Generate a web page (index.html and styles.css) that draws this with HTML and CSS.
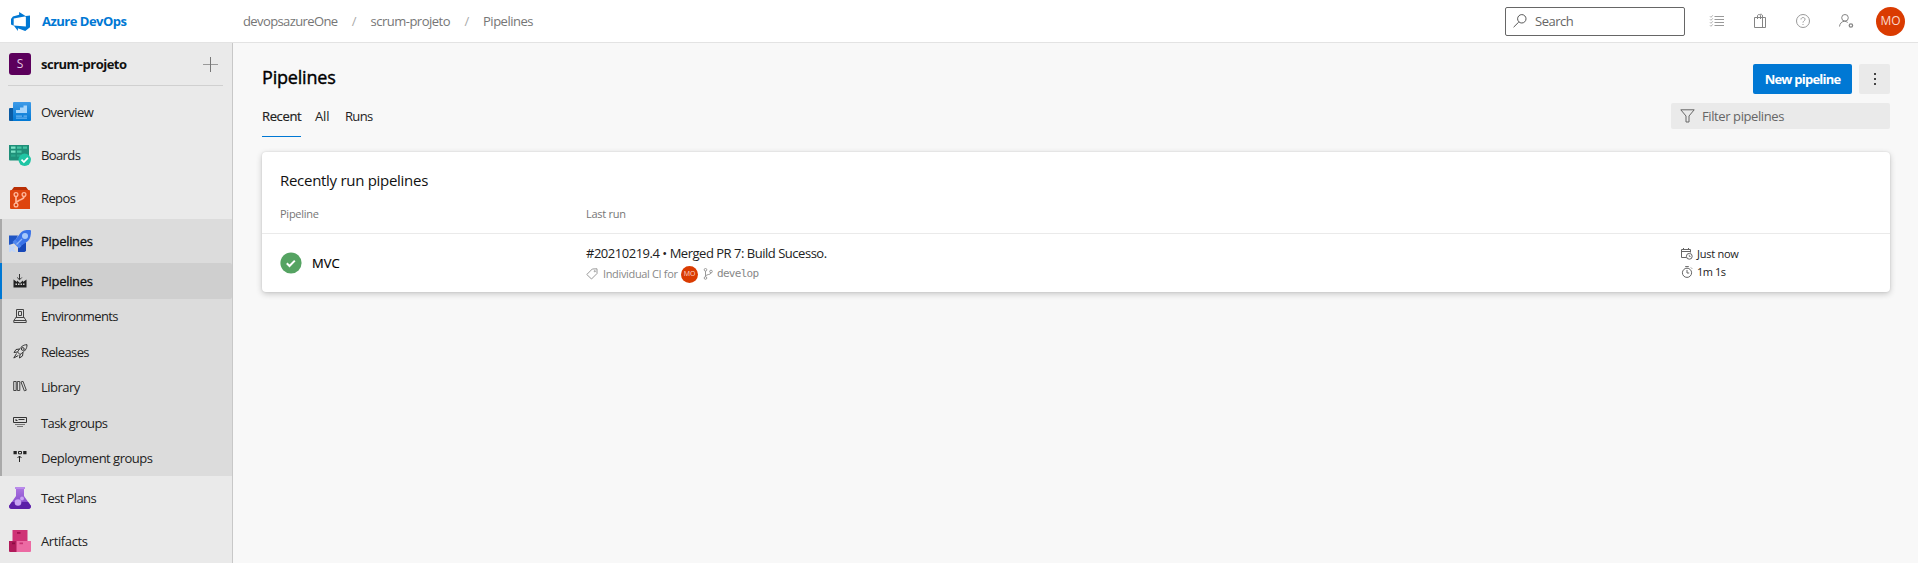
FILE: index.html
```html
<!DOCTYPE html>
<html lang="en">
<head>
<meta charset="utf-8">
<title>Pipelines</title>
<link rel="stylesheet" href="styles.css">
</head>
<body>
<header class="topbar">
  <a class="brand">
    <svg class="brand-logo" viewBox="1 1 16 16"><path fill="#0078d4" d="M17 4v9.740l-4 3.280-6.200-2.260V17l-3.510-4.590 10.230.8V4.440zm-3.410.490L7.850 1v2.290L2.580 4.840 1 6.870v4.610l2.260 1V6.570z"/></svg>
    <span class="brand-name">Azure DevOps</span>
  </a>
  <nav class="crumbs">
    <span class="snug">devopsazureOne</span><i>/</i><span>scrum-projeto</span><i>/</i><span>Pipelines</span>
  </nav>
  <div class="tools">
    <div class="search">
      <svg width="14" height="14" viewBox="0 0 14 14" fill="none" stroke="#555"><circle cx="8.800" cy="4.800" r="4.200"/><path d="M5.800 8 .6 13.200"/></svg>
      <span>Search</span>
    </div>
    <div class="tool-icons">
      <svg width="16" height="16" viewBox="0 0 16 16" fill="none" stroke="#999"><path d="M5.500 3.500H15M5.500 6.500H15M5.500 9.500H15M5.500 12.500H15"/><path stroke-width=".8" d="m1 3.300 1 1 1.800-2M1 6.300l1 1 1.800-2M1 9.300l1 1 1.800-2M1 12.300l1 1 1.800-2"/></svg>
      <svg width="16" height="16" viewBox="0 0 16 16" fill="none" stroke="#858585"><path d="M2.500 4.500h11v10h-11zM10.500 4.500v10M5.500 6V3c0-2 3-2 3 0v3M8 1.600c1-.8 2.500-.2 2.500 1.400v3"/></svg>
      <svg width="16" height="16" viewBox="0 0 16 16" fill="none" stroke="#999"><circle cx="8" cy="8" r="6.500"/><path d="M6 6.500c0-2.600 4-2.600 4-.2C10 7.800 8 7.900 8 9.600M8 11v1"/></svg>
      <svg width="16" height="16" viewBox="0 0 16 16" fill="none" stroke="#858585"><circle cx="7" cy="4.800" r="3.300"/><path d="M1.500 13.500c.3-3.200 2.500-5.200 5-5.200 1.200 0 2.300.4 3.200 1.200"/><circle cx="12.900" cy="12.500" r="1.700" stroke-width="1.300"/></svg>
    </div>
    <span class="avatar">MO</span>
  </div>
</header>

<div class="shell">
  <aside class="sidebar">
    <div class="project">
      <span class="project-badge">S</span>
      <span class="project-name">scrum-projeto</span>
      <svg class="plus" width="15" height="15" viewBox="0 0 15 15" fill="none"><path stroke="#999" d="M0 7.500h15"/><path stroke="#777" d="M7.500 0v15"/></svg>
    </div>
    <nav class="menu">
      <a class="item"><svg width="22" height="22" viewBox="0 0 22 22"><defs><linearGradient id="ov" x2="0" y2="1"><stop stop-color="#3f9be8"/><stop offset="1" stop-color="#0078d4"/></linearGradient></defs><path fill="#0a5ba4" d="M0 8q0-1 1-1h4v13H1q-1 0-1-1z"/><path fill="url(#ov)" d="M4 2q0-1 1-1h16q1 0 1 1v17q0 1-1 1H4z"/><path fill="#a9d6fb" d="M7 9h4v3H7zM11 6.500h3.500V12H11zM14.500 4.500H18V12h-3.500z"/><path fill="#68b2f0" d="M7 14.500h6v1.300H7zM14.500 14.500H18v1.300h-3.500zM7 16.500h11v1.300H7z"/></svg><span>Overview</span></a>
      <a class="item"><svg width="22" height="22" viewBox="0 0 22 22"><path fill="#1f8f79" d="M0 1h20v15.500H1q-1 0-1-1z"/><path fill="#7fe3c8" d="M2 2.500h4.500v2.200H2zM2 6.500h4.500v2.200H2z"/><path fill="#45c3a3" d="M8 2.500h4.500v2.200H8zM14 2.500h4v2.200h-4zM8 6.500h4.500v2.200H8z"/><path fill="#2aa88c" d="M2 10.500h4.500v2.200H2zM8 10.500h4.500v2.200H8z"/><circle cx="15.700" cy="15.800" r="6.200" fill="#1fc5a4"/><path d="m12.500 15.600 2.400 2.400 4-4.200" fill="none" stroke="#fff" stroke-width="1.700"/></svg><span class="snug">Boards</span></a>
      <a class="item"><svg width="22" height="22" viewBox="0 0 22 22"><path fill="#b92f04" d="M5 0h12l3 4H2z"/><path fill="#de450f" d="M1 4q0-1 1-1h18q1 0 1 1v18H2q-1 0-1-1z"/><g fill="none" stroke="#ffb79b" stroke-width="1.300"><circle cx="7" cy="7.500" r="1.900"/><circle cx="15" cy="7.500" r="1.900"/><circle cx="7" cy="18" r="1.900"/></g><path fill="none" stroke="#ffb79b" stroke-width="1.700" d="M7 9.500V16M15 9.500c0 3-3 2.500-5.500 4.200C8 14.700 7 15.500 7 16"/></svg><span class="snug">Repos</span></a>
      <div class="group">
        <a class="item item-open"><svg width="22" height="22" viewBox="0 0 22 22"><path fill="#1f55c4" d="M0 5.500h9l-4.500 8L0 15z"/><path fill="#1748b8" d="M17 12v9l-1.500 1H9v-5z"/><path fill="#3a73e8" d="M5 11.500 11.500 3C13.500.5 16 0 21 0q1 0 1 1c0 4-.5 7.500-3 10L10.500 17z"/><path fill="#4f86ee" d="M3.500 12 6 9.500l6.500 6.500-2.500 2.500z"/><path stroke="#8db5f8" stroke-width="1.300" d="m7.500 14.500 5.500-5.500"/><circle cx="16" cy="6" r="3" fill="#a6c8fb"/><path fill="#c3d7f8" d="M0 14.500 3 17l1-2 2.500 2.500-2 1L7 22H5l-2.500-1.500L1.500 22H0z"/></svg><span class="strong">Pipelines</span></a>
        <a class="sub sub-active"><svg width="14" height="14" viewBox="0 0 14 14"><path fill="none" stroke="#333" d="M6.500 0v5.500M4.200 3.500 6.500 5.800l2.300-2.300"/><path fill="#222" d="M.5 5.500 4 8V6.500L7 9l3-2.500V8l3.500-2.500v8H.5z"/><path fill="#ccc" d="M2.500 9.500H4V11H2.500zM5 9.500h1.500V11H5zM7.500 9.500H9V11H7.500zM10 9.500h1.500V11H10z"/></svg><span class="strong">Pipelines</span></a>
        <a class="sub"><svg width="14" height="14" viewBox="0 0 14 14" fill="none" stroke="#444"><path d="M3.500.500h7v8h-7zM2.500 8.500h9M3 8.500.8 11.500v2h12.400v-2L11 8.500M1 11.500h12M5.500 2.500h3v4h-3z"/></svg><span class="snug">Environments</span></a>
        <a class="sub"><svg width="15" height="15" viewBox="0 0 15 15" fill="none" stroke="#333"><path d="M14 .7C10 .7 8 2.700 4.500 8l2.500 2.500C12 7 14 5 14 .7zM6.500 5 3 5.500 1 8.500l3.500-.5M10 8.500l-.5 3.500-3 2 .5-3.500M3.500 9.500 .8 14l4.500-2.500"/><circle cx="9.800" cy="5" r="1.400"/></svg><span class="snug">Releases</span></a>
        <a class="sub"><svg width="14" height="14" viewBox="0 0 14 14" fill="none" stroke="#444"><path d="M.7 1.500h2.500v9H.7zM4.300 1.500h2.500v9H4.300zM8 2l2-.7 3.300 8.900-2 .6z"/></svg><span>Library</span></a>
        <a class="sub"><svg width="14" height="14" viewBox="0 0 14 14" fill="none" stroke="#333"><path d="M.500 1.500h13v5H.500zM2.500 4.500h2M5.500 3.500h6M2.500 3.500h1"/><path stroke="#777" d="M2 8.500h10M4 10.500h6"/></svg><span class="snug">Task groups</span></a>
        <a class="sub"><svg width="14" height="14" viewBox="0 0 14 14"><path fill="#222" d="M.5 0h3.300v3.300H.5zM10.200 0h3.300v3.300h-3.300z"/><path fill="none" stroke="#222" d="M5.500.500h3v2.300h-3zM6.500 11V5.200M4.500 7l2-2 2 2"/></svg><span>Deployment groups</span></a>
      </div>
      <a class="item"><svg width="22" height="22" viewBox="0 0 22 22"><defs><linearGradient id="tp" x2="0" y2="1"><stop stop-color="#ab74e0"/><stop offset="1" stop-color="#7a3fc6"/></linearGradient></defs><path fill="url(#tp)" d="M7 1.500h8V9l7 10q0 3-3 3H3q-3 0-3-3L7 9z"/><path fill="#5c1fa8" d="M2.800 15h16.400L22 19q0 3-3 3H3q-3 0-3-3z"/><path fill="#b98bea" d="M6 0h10v2H6z"/><circle cx="9" cy="15.500" r="3.300" fill="#c9a3f3"/><circle cx="13" cy="11.500" r="1.900" fill="#c9a3f3"/></svg><span class="snug">Test Plans</span></a>
      <a class="item"><svg width="22" height="22" viewBox="0 0 22 22"><path fill="#cf3376" d="M3.500 0h15v11h-15z"/><path fill="#a31252" d="M8 2h3.500v1.800H8z"/><path fill="#b11b5b" d="M0 11h8v11H1q-1 0-1-1z"/><path fill="#ec6aa3" d="M7.500 11H22v10q0 1-1 1H7.500z"/><path fill="#8a0d43" d="M3 12.500h3v1.700H3z"/><path fill="#c93274" d="M10.500 12.500H14v1.700h-3.500z"/></svg><span class="loose">Artifacts</span></a>
    </nav>
  </aside>

  <main class="content">
    <div class="title-row">
      <h1>Pipelines</h1>
      <div class="actions">
        <button class="primary">New pipeline</button>
        <button class="more"><svg width="3" height="13" viewBox="0 0 3 13" fill="#444"><path d="M1 0h2v2H1zM1 5h2v2H1zM1 10h2v2H1z"/></svg></button>
      </div>
    </div>
    <div class="tab-row">
      <nav class="tabs"><a class="tab tab-on">Recent</a><a class="tab tab-all">All</a><a class="tab tab-runs">Runs</a></nav>
      <div class="filter">
        <svg width="15" height="14" viewBox="0 0 15 14" fill="none" stroke="#666"><path d="M.8.800h13.400L9 7v6H6V7z"/></svg>
        <span class="loose">Filter pipelines</span>
      </div>
    </div>
    <section class="card">
      <h2>Recently run pipelines</h2>
      <div class="grid head"><span>Pipeline</span><span>Last run</span></div>
      <div class="grid row">
        <div class="pipe">
          <svg width="22" height="22" viewBox="0 0 22 22"><circle cx="11" cy="11" r="10.600" fill="#55a362"/><path d="m6.800 11.300 2.700 2.700 5.300-5.400" fill="none" stroke="#fff" stroke-width="2"/></svg>
          <span class="pipe-name">MVC</span>
        </div>
        <div class="run">
          <div class="run-title">#20210219.4 • Merged PR 7: Build Sucesso.</div>
          <div class="run-meta">
            <svg width="12" height="12" viewBox="0 0 12 12" fill="none" stroke="#999"><path d="M.8 6.500 6.300 1 11 .8V5.500L5.500 11z"/><circle cx="8.800" cy="3.200" r=".6"/></svg>
            <span class="reason">Individual CI for</span>
            <span class="avatar avatar-sm">MO</span>
            <svg class="branch" width="10" height="12" viewBox="0 0 10 12" fill="none" stroke="#999"><circle cx="2.500" cy="1.800" r="1.300"/><circle cx="2.500" cy="10" r="1.300"/><circle cx="8" cy="3.500" r="1.300"/><path d="M2.500 3v5.700M8 5c0 2-5.500 1-5.500 3.500"/></svg>
            <span class="mono">develop</span>
          </div>
        </div>
        <div class="times">
          <div class="time"><svg width="12" height="12" viewBox="0 0 12 12" fill="none" stroke="#666"><path d="M5.500 9.500h-5v-8h9v3M.5 3.500h9M2.500 0v2M7.500 0v2"/><circle cx="8.300" cy="8.300" r="2.900"/><path d="M8.300 6.800v1.700h1.300" stroke-width=".8"/></svg><span>Just now</span></div>
          <div class="time"><svg width="12" height="12" viewBox="0 0 12 12" fill="none" stroke="#666"><circle cx="6" cy="6.800" r="4.600"/><path d="M6 4v3h2.200M4.200.600h3.600M10 1.600l1 1"/></svg><span class="duration">1m 1s</span></div>
        </div>
      </div>
    </section>
  </main>
</div>
</body>
</html>
```
FILE: styles.css
```css
* { box-sizing: border-box; }
body {
  margin: 0;
  height: 563px;
  overflow: hidden;
  display: flex;
  flex-direction: column;
  font: 13px/20px "Open Sans", "Noto Sans", sans-serif;
  letter-spacing: -0.5px;
  color: #222;
  background: #f8f8f8;
}
svg { display: block; flex: none; }
span { white-space: nowrap; }
h1, h2 { margin: 0; }
.snug { letter-spacing: -0.61px; }
.loose { letter-spacing: -0.4px; }

.topbar {
  height: 43px;
  flex: none;
  display: flex;
  align-items: center;
  background: #fff;
  border-bottom: 1px solid #e3e3e3;
  padding-right: 13px;
}
.brand { display: flex; align-items: center; gap: 12px; width: 243px; padding-left: 11px; }
.brand-logo { width: 19px; height: 19px; }
.brand-name { font-weight: 700; color: #0078d4; }
.crumbs { display: flex; color: #767676; }
.crumbs i { font-style: normal; width: 33px; text-align: center; color: #aaa; }
.tools { margin-left: auto; display: flex; align-items: center; }
.search {
  width: 180px;
  height: 29px;
  border: 1px solid #666;
  border-radius: 2px;
  display: flex;
  align-items: center;
  gap: 8px;
  padding-left: 7px;
  color: #666;
}
.tool-icons { display: flex; gap: 27px; margin: 0 22px 0 24px; }
.avatar {
  width: 29px;
  height: 29px;
  border-radius: 50%;
  background: #da3b01;
  color: #fbd9cc;
  font-size: 12px;
  letter-spacing: 0;
  display: flex;
  align-items: center;
  justify-content: center;
}
.avatar-sm { width: 17px; height: 17px; font-size: 7px; }

.shell { flex: 1; display: flex; min-height: 0; }
.sidebar { width: 233px; flex: none; background: #eaeaea; border-right: 1px solid #c8c8c8; }
.project {
  height: 43px;
  margin: 0 9px 4px 8px;
  border-bottom: 1px solid #d0d0d0;
  display: flex;
  align-items: center;
  padding: 0 5px 0 1px;
}
.project-badge {
  width: 22px;
  height: 22px;
  border-radius: 3px;
  background: #5c005c;
  color: #e3c9e3;
  font-size: 12px;
  letter-spacing: 0;
  display: flex;
  align-items: center;
  justify-content: center;
  margin-right: 10px;
}
.project-name { font-weight: 700; color: #111; }
.plus { margin-left: auto; }
.item { height: 43px; display: flex; align-items: center; gap: 10px; padding-left: 9px; }
.group { background: #dcdcdc; box-shadow: inset 2px 0 #a9a9a9; }
.item-open { height: 44px; }
.sub { height: 35.5px; display: flex; align-items: center; padding-left: 13px; }
.sub svg { margin-right: 14px; }
.sub svg[width="15"] { margin-right: 13px; }
.sub-active { background: #cfcfcf; box-shadow: inset 2px 0 #0078d4; border-radius: 0 2px 2px 0; }
.strong { color: #111; letter-spacing: -0.3px; -webkit-text-stroke: 0.3px #111; }

.content { flex: 1; padding: 21px 28px 0 29px; }
.title-row { display: flex; justify-content: space-between; height: 39px; }
h1 { font-size: 18px; line-height: 27px; font-weight: 400; letter-spacing: -0.2px; color: #000; -webkit-text-stroke: 0.4px #000; }
.actions { display: flex; gap: 7px; }
button { border: 0; border-radius: 2px; height: 30px; padding: 0; font: inherit; display: flex; align-items: center; justify-content: center; }
.primary { width: 99px; background: #0078d4; color: #fff; font-weight: 700; letter-spacing: -0.78px; }
.more { width: 31px; background: #eaeaea; }
.tab-row { display: flex; justify-content: space-between; height: 49px; }
.tabs { display: flex; height: 34px; }
.tab { padding-top: 3px; }
.tab-on { width: 39px; margin-right: 14px; letter-spacing: -0.35px; border-bottom: 1px solid #0078d4; -webkit-text-stroke: 0.2px #222; }
.tab-all { width: 14px; margin-right: 16px; letter-spacing: -0.1px; }
.tab-runs { letter-spacing: -0.65px; }
.filter { width: 219px; height: 26px; background: #eaeaea; border-radius: 2px; display: flex; align-items: center; gap: 7px; padding-left: 9px; color: #666; }

.card { height: 140px; background: #fff; border-radius: 4px; box-shadow: 0 2px 6px rgba(0,0,0,.2), 0 0 2px rgba(0,0,0,.12); }
h2 { font-size: 15px; line-height: 20px; font-weight: 400; letter-spacing: -0.29px; color: #111; padding: 18px 18px 0; }
.grid { display: grid; grid-template-columns: 306px 1095px 1fr; padding-left: 18px; }
.head { margin-top: 10px; height: 34px; padding-top: 4px; border-bottom: 1px solid #eaeaea; font-size: 11px; letter-spacing: -0.25px; color: #767676; }
.row { height: 58px; }
.pipe { display: flex; align-items: center; gap: 10px; color: #000; }
.pipe-name { letter-spacing: 0; -webkit-text-stroke: 0.15px #000; }
.run { padding-top: 9px; }
.run-title { letter-spacing: -0.48px; }
.run-meta { display: flex; align-items: center; height: 22px; font-size: 11px; color: #888; }
.reason { width: 75px; margin-left: 5px; margin-right: 3px; letter-spacing: -0.35px; }
.branch { margin: 0 4px 0 5px; }
.mono { font: 11px/20px "DejaVu Sans Mono", monospace; letter-spacing: -0.7px; }
.times { padding-top: 11px; font-size: 11px; line-height: 18px; letter-spacing: -0.25px; }
.time { display: flex; align-items: center; gap: 4px; height: 18px; }
.duration { letter-spacing: -0.45px; }
```
